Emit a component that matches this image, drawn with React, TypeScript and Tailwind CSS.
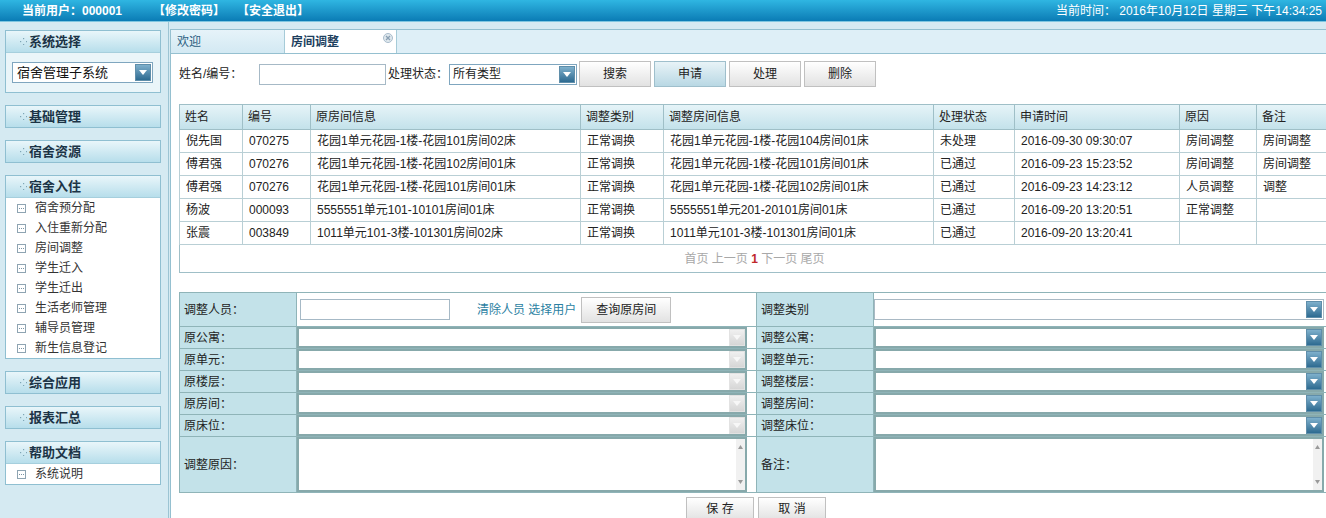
import React from 'react'

type Row = {
  name: string
  no: string
  from: string
  kind: string
  to: string
  state: string
  time: string
  reason: string
  note: string
}

const rows: Row[] = [
  { name: '倪先国', no: '070275', from: '花园1单元花园-1楼-花园101房间02床', kind: '正常调换', to: '花园1单元花园-1楼-花园104房间01床', state: '未处理', time: '2016-09-30 09:30:07', reason: '房间调整', note: '房间调整' },
  { name: '傅君强', no: '070276', from: '花园1单元花园-1楼-花园102房间01床', kind: '正常调换', to: '花园1单元花园-1楼-花园101房间01床', state: '已通过', time: '2016-09-23 15:23:52', reason: '房间调整', note: '房间调整' },
  { name: '傅君强', no: '070276', from: '花园1单元花园-1楼-花园101房间01床', kind: '正常调换', to: '花园1单元花园-1楼-花园102房间01床', state: '已通过', time: '2016-09-23 14:23:12', reason: '人员调整', note: '调整' },
  { name: '杨波', no: '000093', from: '5555551单元101-10101房间01床', kind: '正常调换', to: '5555551单元201-20101房间01床', state: '已通过', time: '2016-09-20 13:20:51', reason: '正常调整', note: '' },
  { name: '张震', no: '003849', from: '1011单元101-3楼-101301房间02床', kind: '正常调换', to: '1011单元101-3楼-101301房间01床', state: '已通过', time: '2016-09-20 13:20:41', reason: '', note: '' },
]

const heads = ['姓名', '编号', '原房间信息', '调整类别', '调整房间信息', '处理状态', '申请时间', '原因', '备注']
const colWidths = [63, 68, 270, 83, 270, 81, 165, 77, 73]

const DotsIcon = () => (
  <svg width="7" height="7" viewBox="0 0 7 7" className="mr-[2px]">
    <rect x="3" y="0" width="1.2" height="1.2" fill="#7ea6b6" />
    <rect x="0" y="3" width="1.2" height="1.2" fill="#7ea6b6" />
    <rect x="6" y="3" width="1.2" height="1.2" fill="#7ea6b6" />
    <rect x="3" y="6" width="1.2" height="1.2" fill="#7ea6b6" />
  </svg>
)

const ItemIcon = () => (
  <svg width="9" height="9" viewBox="0 0 9 9">
    <rect x="0.5" y="0.5" width="8" height="8" fill="#fff" stroke="#8ea4b2" />
    <rect x="2" y="4" width="1" height="1" fill="#7a93a3" />
    <rect x="4" y="4" width="1" height="1" fill="#7a93a3" />
    <rect x="6" y="4" width="1" height="1" fill="#7a93a3" />
  </svg>
)

const DropBtn = ({ disabled }: { disabled?: boolean }) => (
  <span
    className={
      disabled
        ? 'flex h-full w-[16px] shrink-0 items-center justify-center bg-gradient-to-b from-[#f0f0f0] to-[#d6d6d6] border border-[#e2e2e2]'
        : 'flex h-full w-[16px] shrink-0 items-center justify-center bg-gradient-to-b from-[#7eb0cc] to-[#2d6b91] border border-[#5f8eaa]'
    }
  >
    <svg width="8" height="5" viewBox="0 0 8 5">
      <path d="M0 0 L8 0 L4 5 Z" fill={disabled ? '#f7f7f7' : '#fff'} />
    </svg>
  </span>
)

const PanelHead = ({ title }: { title: string }) => (
  <div className="flex h-[21px] items-center bg-gradient-to-b from-[#e9f6fa] to-[#b7deeb] pl-[14px] text-[13px] font-bold text-[#1c3446]">
    <DotsIcon />
    {title}
  </div>
)

const Panel = ({ title, items }: { title: string; items?: string[] }) => (
  <div className="ml-[5px] w-[156px] border border-[#8fbfd1]">
    <PanelHead title={title} />
    {items && (
      <div className="border-t border-[#a6cfdd] bg-white">
        {items.map((it) => (
          <div key={it} className="flex h-[20px] items-center pl-[11px] text-[12px] text-[#333]">
            <ItemIcon />
            <span className="ml-[9px]">{it}</span>
          </div>
        ))}
      </div>
    )}
  </div>
)

const Btn = ({ label, active }: { label: string; active?: boolean }) => (
  <button
    className={
      active
        ? 'h-[26px] w-[72px] border border-[#9fbfcc] bg-gradient-to-b from-[#e8f3f7] to-[#b9d8e4] text-[12px] text-[#222]'
        : 'h-[26px] w-[72px] border border-[#c0c0c0] bg-gradient-to-b from-[#ffffff] to-[#e2e2e2] text-[12px] text-[#222]'
    }
  >
    {label}
  </button>
)

const FormSelect = ({ disabled, thin }: { disabled?: boolean; thin?: boolean }) => (
  <div
    className={
      thin
        ? 'flex h-[21px] w-full items-stretch border border-[#a9b9c4] bg-white p-[1px]'
        : 'flex h-[21px] w-full items-stretch border-2 border-[#87a9ab] bg-white'
    }
  >
    <span className="flex-1" />
    <DropBtn disabled={disabled} />
  </div>
)

const FormArea = () => (
  <div className="flex h-[55px] w-full items-stretch border-2 border-[#87a9ab] bg-white">
    <span className="flex-1" />
    <span className="flex w-[9px] flex-col items-center justify-between bg-[#f1f1f1] py-[6px]">
      <svg width="5" height="4" viewBox="0 0 5 4"><path d="M2.5 0 L5 4 L0 4 Z" fill="#9a9a9a" /></svg>
      <svg width="5" height="4" viewBox="0 0 5 4"><path d="M0 0 L5 0 L2.5 4 Z" fill="#9a9a9a" /></svg>
    </span>
  </div>
)

const formRows = [
  ['原公寓：', '调整公寓：'],
  ['原单元：', '调整单元：'],
  ['原楼层：', '调整楼层：'],
  ['原房间：', '调整房间：'],
  ['原床位：', '调整床位：'],
]

const labelCls = 'border border-[#8fb4b8] bg-[#c3e2e9] pl-[4px] text-left text-[12px] font-normal text-[#222]'
const valueCls = 'border border-[#8fb4b8] bg-white p-0'

export default function App() {
  return (
    <div className="h-[518px] w-[1326px] overflow-hidden bg-[#d5eaf2] font-['Liberation_Sans','Noto_Sans_CJK_SC',sans-serif] text-[#222]">
      {/* top bar */}
      <div className="flex h-[22px] items-center justify-between border-b border-[#7fc6e0] bg-gradient-to-b from-[#2fb6e2] to-[#0a7cb5] pl-[22px] pr-[4px] text-[12px] text-white">
        <div className="flex items-center font-bold">
          <span>当前用户：000001</span>
          <span className="ml-[31px]">【修改密码】</span>
          <span className="ml-[12px]">【安全退出】</span>
        </div>
        <div>当前时间： 2016年10月12日 星期三 下午14:34:25</div>
      </div>

      <div className="flex h-[496px]">
        {/* sidebar */}
        <div className="flex w-[169px] shrink-0 flex-col gap-[12px] border-r border-[#9cc4d3] pt-[8px]">
          <div className="ml-[5px] w-[156px] border border-[#8fbfd1]">
            <PanelHead title="系统选择" />
            <div className="flex h-[40px] items-center border-t border-[#a6cfdd] bg-[#eaf5f9] pl-[6px]">
              <div className="flex h-[21px] w-[141px] items-stretch border border-[#7fa6bf] bg-white p-[1px]">
                <span className="flex-1 pl-[3px] text-[13px] leading-[17px] text-[#111]">宿舍管理子系统</span>
                <DropBtn />
              </div>
            </div>
          </div>
          <Panel title="基础管理" />
          <Panel title="宿舍资源" />
          <Panel title="宿舍入住" items={['宿舍预分配', '入住重新分配', '房间调整', '学生迁入', '学生迁出', '生活老师管理', '辅导员管理', '新生信息登记']} />
          <Panel title="综合应用" />
          <Panel title="报表汇总" />
          <Panel title="帮助文档" items={['系统说明']} />
        </div>

        {/* main */}
        <div className="ml-[1px] mt-[7px] flex-1 overflow-hidden border-l border-t border-[#95c0d0] bg-white">
          <div className="flex h-[24px] border-b border-[#95c0d0] bg-[#deeff7]">
            <div className="flex w-[114px] items-center border-r border-[#a6cbd8] bg-gradient-to-b from-[#e6f3f9] to-[#d3e9f3] pl-[6px] text-[12px] text-[#2c5d80]">
              欢迎
            </div>
            <div className="relative flex w-[112px] items-center border-r border-[#a6cbd8] bg-white pl-[6px] text-[12px] font-bold text-[#1d3f5e]">
              房间调整
              <svg width="10" height="10" viewBox="0 0 10 10" className="absolute right-[3px] top-[3px]">
                <circle cx="5" cy="5" r="4.5" fill="#dfe8ee" stroke="#a9bccb" />
                <path d="M3 3 L7 7 M7 3 L3 7" stroke="#8aa0b2" strokeWidth="1.3" />
              </svg>
            </div>
          </div>

          <div className="pl-[8px]">
            {/* search row */}
            <div className="mt-[7px] flex h-[26px] items-center text-[12px]">
              <span className="w-[80px]">姓名/编号：</span>
              <input className="h-[21px] w-[127px] border border-[#a6b9c6] bg-white outline-none" />
              <span className="ml-[2px] w-[61px]">处理状态：</span>
              <div className="flex h-[21px] w-[128px] items-stretch border border-[#7fa6bf] bg-white p-[1px]">
                <span className="flex-1 pl-[2px] text-[12px] leading-[17px]">所有类型</span>
                <DropBtn />
              </div>
              <div className="ml-[2px] flex gap-[3px]">
                <Btn label="搜索" />
                <Btn label="申请" active />
                <Btn label="处理" />
                <Btn label="删除" />
              </div>
            </div>

            {/* list table */}
            <table className="mt-[17px] w-[1150px] table-fixed border-collapse text-[12px]">
              <colgroup>
                {colWidths.map((w, i) => (
                  <col key={i} style={{ width: w }} />
                ))}
              </colgroup>
              <thead>
                <tr className="h-[25px] bg-gradient-to-b from-[#e6f4f8] to-[#c2e1ea]">
                  {heads.map((h) => (
                    <th key={h} className="border border-[#9fbfc7] pl-[5px] text-left font-normal">
                      {h}
                    </th>
                  ))}
                </tr>
              </thead>
              <tbody>
                {rows.map((r, i) => (
                  <tr key={i} className="h-[23px]">
                    {[r.name, r.no, r.from, r.kind, r.to, r.state, r.time, r.reason, r.note].map((c, j) => (
                      <td key={j} className="whitespace-nowrap border border-[#b9cfd5] pl-[6px] text-[#222]">
                        {c}
                      </td>
                    ))}
                  </tr>
                ))}
                <tr className="h-[28px]">
                  <td colSpan={9} className="border border-[#9fbfc7] text-center text-[12px] text-[#a8a8a8]">
                    首页 上一页 <b className="text-[#c0282b]">1</b> 下一页 尾页
                  </td>
                </tr>
              </tbody>
            </table>

            {/* form */}
            <table className="mt-[19px] w-[1148px] table-fixed border-collapse text-[12px]">
              <colgroup>
                <col style={{ width: 117 }} />
                <col style={{ width: 460 }} />
                <col style={{ width: 117 }} />
                <col style={{ width: 454 }} />
              </colgroup>
              <tbody>
                <tr className="h-[34px]">
                  <th className={labelCls}>调整人员：</th>
                  <td className={valueCls}>
                    <div className="flex items-center pl-[3px]">
                      <input className="h-[21px] w-[150px] border border-[#a6b9c6] outline-none" />
                      <span className="ml-[27px] text-[#2b7fa2]">清除人员 选择用户</span>
                      <button className="ml-[5px] h-[26px] w-[90px] border border-[#c0c0c0] bg-gradient-to-b from-[#ffffff] to-[#e2e2e2] text-[12px]">
                        查询原房间
                      </button>
                    </div>
                  </td>
                  <th className={labelCls}>调整类别</th>
                  <td className={valueCls}>
                    <div className="pr-[3px]">
                      <FormSelect thin />
                    </div>
                  </td>
                </tr>
                {formRows.map(([l, r]) => (
                  <tr key={l} className="h-[22px]">
                    <th className={labelCls}>{l}</th>
                    <td className={valueCls}>
                      <div className="w-[450px]">
                        <FormSelect disabled />
                      </div>
                    </td>
                    <th className={labelCls}>{r}</th>
                    <td className={valueCls}>
                      <div className="pr-[3px]">
                        <FormSelect />
                      </div>
                    </td>
                  </tr>
                ))}
                <tr className="h-[56px]">
                  <th className={labelCls}>调整原因：</th>
                  <td className={valueCls}>
                    <div className="w-[450px]">
                      <FormArea />
                    </div>
                  </td>
                  <th className={labelCls}>备注：</th>
                  <td className={valueCls}>
                    <div className="pr-[3px]">
                      <FormArea />
                    </div>
                  </td>
                </tr>
              </tbody>
            </table>

            <div className="mt-[4px] flex gap-[4px] pl-[507px]">
              <button className="h-[24px] w-[68px] border border-[#c0c0c0] bg-gradient-to-b from-[#ffffff] to-[#e2e2e2] text-[12px]">保 存</button>
              <button className="h-[24px] w-[68px] border border-[#c0c0c0] bg-gradient-to-b from-[#ffffff] to-[#e2e2e2] text-[12px]">取 消</button>
            </div>
          </div>
        </div>
      </div>
    </div>
  )
}
